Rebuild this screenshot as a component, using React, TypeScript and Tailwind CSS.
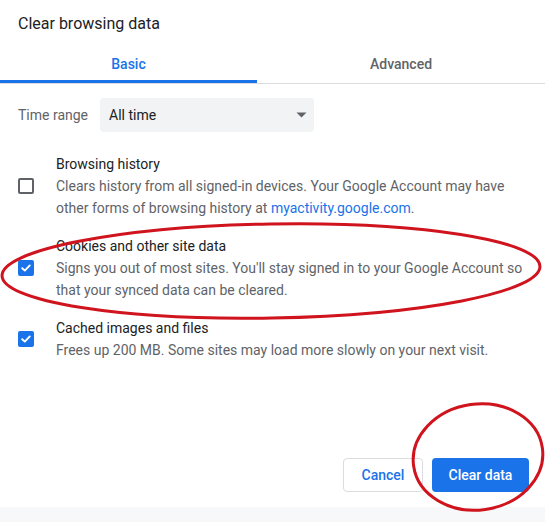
import React from "react";

function Check({ checked }: { checked: boolean }) {
  return checked ? (
    <div className="w-4 h-4 rounded-[2px] bg-[#1a73e8] flex items-center justify-center">
      <svg width="12" height="12" viewBox="0 0 12 12">
        <path d="M2.2 6.2 L4.8 8.6 L9.8 3.4" stroke="white" strokeWidth="1.9" fill="none" strokeLinecap="round" strokeLinejoin="round" />
      </svg>
    </div>
  ) : (
    <div className="w-4 h-4 rounded-[2px] border-2 border-[#5f6368]" />
  );
}

function Item({ checked, title, children }: { checked: boolean; title: string; children: React.ReactNode }) {
  return (
    <div className="flex items-center">
      <div className="w-[56px] pl-[18px] flex items-center">
        <Check checked={checked} />
      </div>
      <div className="flex flex-col">
        <div className="text-[14px] leading-[22px] text-[#202124]">{title}</div>
        <div className="text-[14px] leading-[22px] text-[#5f6368]">{children}</div>
      </div>
    </div>
  );
}

export default function App() {
  return (
    <div className="relative w-[545px] h-[522px] bg-white overflow-hidden" style={{ fontFamily: "Roboto, 'Liberation Sans', sans-serif" }}>
      <div className="flex flex-col h-full">
        <div className="pl-[18px] pt-[13px] text-[16px] leading-[22px] text-[#202124]">Clear browsing data</div>
        <div className="flex mt-[16px] border-b border-[#dadce0]">
          <div className="w-[257px] h-[32px] flex items-start justify-center text-[14px] leading-[21px] font-medium text-[#1a73e8] border-b-[3px] border-[#1a73e8] -mb-[1px] pt-[3px]">Basic</div>
          <div className="flex-1 h-[32px] flex items-start justify-center text-[14px] leading-[21px] font-medium text-[#5f6368] pt-[3px]">Advanced</div>
        </div>
        <div className="flex items-center mt-[14px] pl-[18px]">
          <div className="w-[82px] text-[14px] text-[#5f6368]">Time range</div>
          <div className="w-[214px] h-[34px] bg-[#f1f3f4] rounded-[4px] flex items-center justify-between pl-[9px] pr-[7px]">
            <span className="text-[14px] text-[#202124]">All time</span>
            <svg width="11" height="6" viewBox="0 0 11 6"><path d="M0.5 0.5 L10.5 0.5 L5.5 5.5 Z" fill="#5f6368" /></svg>
          </div>
        </div>
        <div className="flex flex-col mt-[21px] gap-[16px]">
          <Item checked={false} title="Browsing history">
            Clears history from all signed-in devices. Your Google Account may have
            <br />
            other forms of browsing history at <span className="text-[#1a73e8]">myactivity.google.com</span>.
          </Item>
          <Item checked={true} title="Cookies and other site data">
            Signs you out of most sites. You'll stay signed in to your Google Account so
            <br />
            that your synced data can be cleared.
          </Item>
          <Item checked={true} title="Cached images and files">
            Frees up 200 MB. Some sites may load more slowly on your next visit.
          </Item>
        </div>
        <div className="flex-1" />
        <div className="flex justify-end gap-[9px] pr-[16px] pb-[15px]">
          <button className="h-[34px] w-[80px] rounded-[4px] border border-[#dadce0] bg-white text-[14px] font-medium text-[#1a73e8]">Cancel</button>
          <button className="h-[34px] w-[97px] rounded-[4px] bg-[#1a73e8] text-[14px] font-medium text-white">Clear data</button>
        </div>
        <div className="h-[15px] bg-[#f7f8f9]" />
      </div>
      <svg className="absolute inset-0 pointer-events-none" width="545" height="522" viewBox="0 0 545 522">
        <ellipse cx="271" cy="271" rx="269" ry="47" transform="rotate(-1 271 271)" fill="none" stroke="#d0141e" strokeWidth="3" />
        <ellipse cx="478" cy="457" rx="65" ry="53" transform="rotate(-8 478 457)" fill="none" stroke="#d0141e" strokeWidth="3" />
      </svg>
    </div>
  );
}
